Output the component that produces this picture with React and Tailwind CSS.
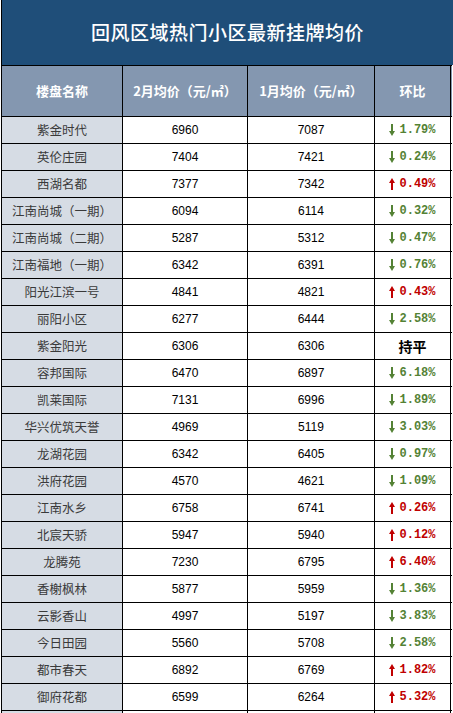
import React from "react";

const rows = [
  ["紫金时代", "6960", "7087", "d", "1.79%"],
  ["英伦庄园", "7404", "7421", "d", "0.24%"],
  ["西湖名都", "7377", "7342", "u", "0.49%"],
  ["江南尚城（一期）", "6094", "6114", "d", "0.32%"],
  ["江南尚城（二期）", "5287", "5312", "d", "0.47%"],
  ["江南福地（一期）", "6342", "6391", "d", "0.76%"],
  ["阳光江滨一号", "4841", "4821", "u", "0.43%"],
  ["丽阳小区", "6277", "6444", "d", "2.58%"],
  ["紫金阳光", "6306", "6306", "f", "持平"],
  ["容邦国际", "6470", "6897", "d", "6.18%"],
  ["凯莱国际", "7131", "6996", "d", "1.89%"],
  ["华兴优筑天誉", "4969", "5119", "d", "3.03%"],
  ["龙湖花园", "6342", "6405", "d", "0.97%"],
  ["洪府花园", "4570", "4621", "d", "1.09%"],
  ["江南水乡", "6758", "6741", "u", "0.26%"],
  ["北宸天骄", "5947", "5940", "u", "0.12%"],
  ["龙腾苑", "7230", "6795", "u", "6.40%"],
  ["香榭枫林", "5877", "5959", "d", "1.36%"],
  ["云影香山", "4997", "5197", "d", "3.83%"],
  ["今日田园", "5560", "5708", "d", "2.58%"],
  ["都市春天", "6892", "6769", "u", "1.82%"],
  ["御府花都", "6599", "6264", "u", "5.32%"],
  ["", "", "", "", ""],
];

function Arrow({ up }) {
  const color = up ? "#c00000" : "#548235";
  return (
    <svg width="6" height="12" viewBox="0 0 6 12" className="shrink-0">
      {up ? (
        <>
          <rect x="2" y="4" width="2" height="8" fill={color} />
          <polygon points="3,0 6,5 0,5" fill={color} />
        </>
      ) : (
        <>
          <rect x="2" y="0" width="2" height="8" fill={color} />
          <polygon points="3,12 6,7 0,7" fill={color} />
        </>
      )}
    </svg>
  );
}

export default function App() {
  return (
    <div
      className="w-[453px] h-[713px] overflow-hidden bg-white"
      style={{ fontFamily: '"Liberation Sans", "Noto Sans CJK SC", sans-serif' }}
    >
      <div className="ml-[1px] w-[452px] h-[65px] bg-[#1f4e79] border-l border-black flex items-center justify-center">
        <span
          className="text-white text-[19px] font-medium tracking-[0.5px]"
          style={{ fontFamily: '"Noto Sans CJK SC", sans-serif' }}
        >
          回风区域热门小区最新挂牌均价
        </span>
      </div>
      <div className="ml-[1px] w-[451px] border-l border-black">
        <div
          className="flex h-[52px] border-y border-black bg-[#8497b0] text-white text-[13px] font-bold"
          style={{ fontFamily: '"Noto Sans CJK SC", sans-serif' }}
        >
          <div className="w-[121px] border-r border-black flex items-center justify-center">楼盘名称</div>
          <div className="w-[125px] border-r border-black flex items-center justify-center">2月均价（元/㎡）</div>
          <div className="w-[127px] border-r border-black flex items-center justify-center">1月均价（元/㎡）</div>
          <div className="w-[76px] border-r border-black flex items-center justify-center">环比</div>
        </div>
        {rows.map((r, i) => (
          <div key={i} className="flex h-[27px] border-b border-black">
            <div
              className="w-[121px] border-r border-black bg-[#d6dce4] flex items-center justify-center text-[12.5px] text-[#3a3a3a]"
              style={{ fontFamily: '"Noto Sans CJK SC", sans-serif' }}
            >
              {r[0]}
            </div>
            <div className="w-[125px] border-r border-black flex items-center justify-center text-[12px] text-black">
              {r[1]}
            </div>
            <div className="w-[127px] border-r border-black flex items-center justify-center text-[12px] text-black">
              {r[2]}
            </div>
            <div className="w-[76px] border-r border-black flex items-center justify-center">
              {r[3] === "f" ? (
                <span
                  className="text-[14px] font-bold text-black"
                  style={{ fontFamily: '"Noto Sans CJK SC", sans-serif' }}
                >
                  {r[4]}
                </span>
              ) : r[3] ? (
                <span className="flex items-center gap-[4px]">
                  <Arrow up={r[3] === "u"} />
                  <span
                    className={`text-[12px] font-bold ${r[3] === "u" ? "text-[#c00000]" : "text-[#548235]"}`}
                    style={{ fontFamily: '"Liberation Mono", monospace' }}
                  >
                    {r[4]}
                  </span>
                </span>
              ) : null}
            </div>
          </div>
        ))}
      </div>
    </div>
  );
}
